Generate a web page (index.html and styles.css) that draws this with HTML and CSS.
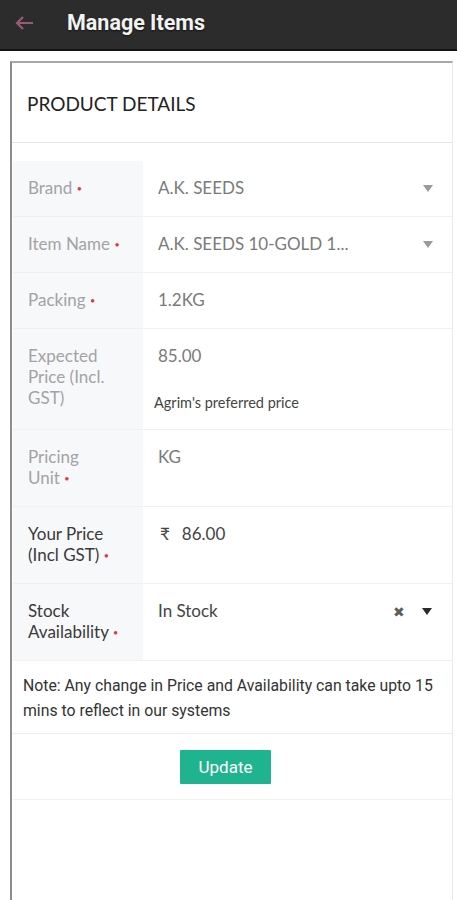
FILE: index.html
```html
<!DOCTYPE html>
<html>
<head>
<meta charset="utf-8">
<link rel="stylesheet" href="styles.css">
</head>
<body>
<header class="topbar">
  <svg class="back" width="20" height="16" viewBox="0 0 20 16"><path d="M19 8H3M9 2L3 8l6 6" fill="none" stroke="#9a5a73" stroke-width="2.2"/></svg>
  <h1 class="title">Manage Items</h1>
</header>
<main class="card">
  <div class="card-head">PRODUCT DETAILS</div>
  <div class="table">
    <div class="row">
      <div class="label">Brand <span class="req">•</span></div>
      <div class="value muted">A.K. SEEDS<span class="caret"></span></div>
    </div>
    <div class="row">
      <div class="label">Item Name <span class="req">•</span></div>
      <div class="value muted">A.K. SEEDS 10-GOLD 1...<span class="caret"></span></div>
    </div>
    <div class="row">
      <div class="label">Packing <span class="req">•</span></div>
      <div class="value muted">1.2KG</div>
    </div>
    <div class="row">
      <div class="label">Expected<br>Price (Incl.<br>GST)</div>
      <div class="value muted col">85.00<span class="hint">Agrim's preferred price</span></div>
    </div>
    <div class="row">
      <div class="label">Pricing<br>Unit <span class="req">•</span></div>
      <div class="value muted">KG</div>
    </div>
    <div class="row">
      <div class="label dark">Your Price<br>(Incl GST) <span class="req">•</span></div>
      <div class="value dark"><span class="rupee">₹</span>86.00</div>
    </div>
    <div class="row">
      <div class="label dark">Stock<br>Availability <span class="req">•</span></div>
      <div class="value dark">In Stock<span class="clear">✖</span><span class="caret darkcaret"></span></div>
    </div>
  </div>
  <p class="note">Note: Any change in Price and Availability can take upto 15 mins to reflect in our systems</p>
  <div class="actions"><button class="btn">Update</button></div>
</main>
</body>
</html>
```
FILE: styles.css
```css
* { box-sizing: border-box; }
html, body { margin: 0; padding: 0; background: #fff; }
body { font-family: Lato, "Open Sans", sans-serif; height: 900px; overflow: hidden; }

.topbar {
  height: 51px;
  background: #2c2c2c;
  border-bottom: 2px solid #141414;
  display: flex;
  align-items: center;
  padding-left: 14px;
  padding-bottom: 4px;
}
.back { margin-right: 33px; }
.title {
  margin: 0;
  font-family: Roboto, sans-serif;
  font-weight: 700;
  font-size: 21.5px;
  color: #f2f2f2;
  text-shadow: 0 1px 2px rgba(0,0,0,0.6);
}

.card {
  margin: 10px 4px 0 10px;
  border-left: 2px solid #8c8c8c;
  border-top: 2px solid #a8a8a8;
  border-right: 1px solid #e8e8e8;
  height: 850px;
}
.card-head {
  height: 80px;
  display: flex;
  align-items: center;
  padding-left: 15px;
  padding-top: 2px;
  font-size: 19px;
  color: #222;
  border-bottom: 1px solid #e6e6e6;
}
.table { margin-top: 18px; margin-left: 1px; }
.row {
  display: grid;
  grid-template-columns: 130px 1fr;
  border-bottom: 1px solid #f0f0f0;
}
.label {
  background: #f7f8fa;
  padding: 16px 10px 18px 15px;
  font-size: 17px;
  line-height: 21px;
  color: #a3a3a3;
  white-space: nowrap;
}
.label.dark { color: #3a3a3a; }
.req {
  color: #e0354a;
  font-size: 9px;
  line-height: 1;
  position: relative;
  top: -2px;
}
.value {
  position: relative;
  padding: 16px 15px 18px 15px;
  font-size: 17px;
  line-height: 21px;
  display: flex;
  align-items: flex-start;
}
.value.muted { color: #7a7a7a; }
.value.dark { color: #444; }
.value.col { flex-direction: column; }
.hint {
  font-size: 14.5px;
  color: #444;
  margin-left: -4px;
  margin-top: 29px;
  line-height: 16px;
}
.rupee { margin-right: 12px; margin-left: 2px; }
.caret {
  position: absolute;
  right: 19px;
  top: 24px;
  width: 0; height: 0;
  border-left: 5.5px solid transparent;
  border-right: 5.5px solid transparent;
  border-top: 7px solid #9a9a9a;
}
.caret.darkcaret { border-top-color: #2a2a2a; top: 24px; right: 20px; }
.clear {
  position: absolute;
  right: 47px;
  top: 17px;
  font-size: 14px;
  color: #5e5e5e;
}
.note {
  margin: 0;
  padding: 12px 8px 10px 10px;
  font-family: Roboto, sans-serif;
  font-size: 15.8px;
  line-height: 25px;
  color: #333;
  border-bottom: 1px solid #ececec;
  margin-left: 1px;
}
.actions {
  display: flex;
  justify-content: center;
  padding: 16px 14px 15px 0;
  border-bottom: 1px solid #f2f2f2;
  margin-left: 1px;
}
.btn {
  width: 91px;
  height: 34px;
  border: none;
  background: #1fb48f;
  color: #fff;
  font-family: Roboto, sans-serif;
  font-size: 17px;
  border-radius: 1px;
}
```
